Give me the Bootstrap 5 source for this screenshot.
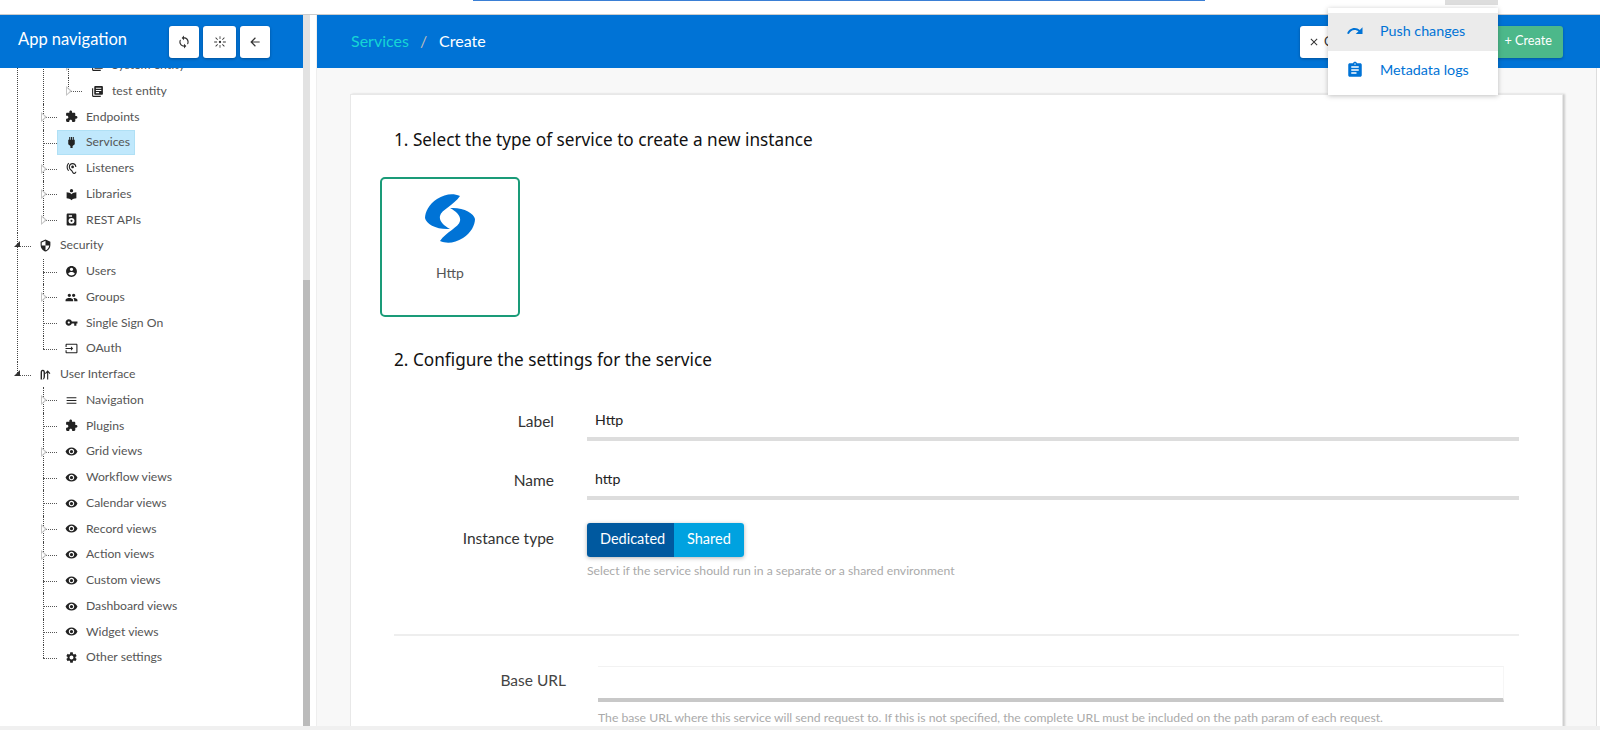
<!doctype html>
<html lang="en"><head><meta charset="utf-8"><title>Services</title>
<link href="https://cdn.jsdelivr.net/npm/bootstrap@5.3.0/dist/css/bootstrap.min.css" rel="stylesheet">
<script src="https://cdn.jsdelivr.net/npm/bootstrap@5.3.0/dist/js/bootstrap.bundle.min.js"></script>
<style>
html,body{height:730px;overflow:hidden;background:#fff}
body{font-family:Lato,"Noto Sans","Liberation Sans",sans-serif;font-size:12.2px;color:#555;position:relative}
.top-strip{height:15px;border-bottom:1px solid #ccc;background:#fff}
.top-line{width:732px;height:1px;margin-left:473px;background:#3a7fd5}
.top-tab{width:53px;height:5px;margin-left:240px;background:#ddd}
.shell{height:711px;overflow:hidden}
.foot-strip{height:4px;background:#f0f0f0}
.side{width:303px;background:#fff;overflow:hidden;flex:none}
.blue-head{height:53px;background:#0073d6;position:relative;z-index:2;flex:none}
.side-title{font-size:16.5px;color:#fff;margin-left:18px;width:151px;margin-top:-4px;white-space:nowrap}
.ico-btn{height:32px;background:#fff;border-radius:3px;box-shadow:0 1px 3px rgba(0,0,0,.3);color:#333;border:0;padding:0;white-space:nowrap;overflow:hidden}
.w30{width:30px}.w33{width:33px}
.ico-btn svg{width:14px;height:14px;fill:currentColor}
.ico-btn .ico-x{width:12px;height:12px}
.side-scroll{width:7px;background:#e2e2e2;flex:none}
.side-thumb{margin-top:265px;height:446px;background:#bbb}
.side-gap{width:7px;flex:none;background:#fff;border-right:1px solid #eee}
.main{flex:1;min-width:0;display:flex;flex-direction:column}
.main-body{flex:1;min-height:0;background:#f8f8f8;margin-right:3px;border-right:1px solid #ddd;overflow:hidden}
.crumb{margin-left:34px;font-size:16px;color:#fff;margin-top:-1px}
.crumb-link{color:#16d5d5}.crumb-sep{color:#bbb;margin:0 12px 0 11px}
.btn-cancel{width:100px;margin-left:auto;text-align:left;padding-left:8px;font-size:13px}
.btn-make{width:153px;margin-left:10px;margin-right:37px;background:#4cb88a;color:#fff;height:32px;border-radius:3px;font-size:12.7px;text-align:right;padding:5px 11px 0 0;box-shadow:0 1px 3px rgba(0,0,0,.25)}
.sheet{margin:26px 33px 0 33px;background:#fff;height:640px;border:1px solid #e8e8e8;box-shadow:2px 0 2px #ccc;padding:33px 43px 0 43px;overflow:hidden}
.step{font-family:"Noto Sans",sans-serif;font-size:17.2px;color:#111;line-height:24px;margin:0}
.tile{width:140px;height:140px;margin:25px 0 0 -14px;border:2px solid #1a9b78;border-radius:5px;color:#555;font-size:14px}
.tile svg{width:50px;height:49px;fill:#0073d6;margin-top:15px}
.tile-name{margin-top:19px}
.step2{margin-top:31px}
.flabel{width:160px;text-align:right;font-size:15.5px;color:#333;flex:none}
.finput{flex:1;margin-left:33px;height:38px;border-bottom:4px solid #ddd;font-size:14.2px;color:#222;padding:6px 0 0 8px}
.gap-a{margin-top:31px}.gap-b{margin-top:21px}.gap-c{margin-top:23px}.gap-d{margin-top:30px}
.seg-wrap{margin-left:33px}
.seg{height:34px;box-shadow:0 1px 4px rgba(0,0,0,.3);border-radius:3px;overflow:hidden;color:#fff;font-size:14.5px;width:157px}
.seg-a{width:87px;background:#00599f;padding:5px 0 0 13px}
.seg-b{width:70px;background:#00a2e0;padding:5px 0 0 13px}
.hint{color:#aaa;font-size:12.2px}
.hint-a{margin-top:5px}
.hint-b{margin:7px 0 0 204px}
.sep-line{height:2px;background:#eee;margin-top:54px}
.flabel-b{width:172px;text-align:right;font-size:15.5px;color:#444;flex:none;padding-top:3px}
.finput-b{width:906px;margin-left:32px;height:36px;border-top:1px solid #f2f2f2;border-right:1px solid #f6f6f6;border-bottom:4px solid #c8c8c8}
.menu-pop{position:absolute;left:1328px;top:8px;width:170px;height:87px;background:#fff;box-shadow:0 1px 5px rgba(0,0,0,.25);padding-top:5px;z-index:5;color:#0073d6;font-size:14.3px}
.menu-row{height:38px;padding-left:18px}
.menu-row svg{width:18px;height:18px;fill:#0073d6;margin-right:16px}
.menu-on{background:#ebebeb;padding-bottom:2px}
.tree{margin:-67px 0 0 0;padding:0;list-style:none}
.tree ul{margin:0;padding:0;list-style:none}
.node{position:relative}
.node::before{content:"";position:absolute;top:0;bottom:0;left:var(--vx);border-left:1px dotted #444}
.node.tail::before{bottom:auto;height:13px}
.node>.line::before{content:"";position:absolute;left:var(--vx);width:14px;top:13px;border-top:1px dotted #555}
.lv1{--vx:17px}.lv2{--vx:43px}.lv3{--vx:68px}
.line{height:25.76px;display:flex;align-items:center;white-space:nowrap}
.lv1>.line{padding-left:39px}
.lv2>.line{padding-left:65px}
.lv3>.line{padding-left:91px}
.line svg{width:13px;height:13px;fill:#222;flex:none;margin-right:8px}
.lv2>.line.sel{padding-left:57px}
.sel-box{display:flex;align-items:center;background:#c0e8fc;border:1px solid #b0e0f5;height:25px;padding:0 4px 0 7px;position:relative}
.tri-o::after{content:"";position:absolute;left:41px;top:8px;border-left:6px solid #c4c4c4;border-top:5px solid transparent;border-bottom:5px solid transparent}
.tri-o>.line::after{content:"";position:absolute;left:42px;top:10px;border-left:3px solid #fff;border-top:3px solid transparent;border-bottom:3px solid transparent;z-index:1}
.tri-o.lv3::after{left:66px}
.tri-o.lv3>.line::after{left:67px}
.tri-f::after{content:"";position:absolute;left:14px;top:8px;width:0;height:0;border-bottom:6px solid #333;border-left:6px solid transparent}
</style></head>
<body>
<svg width="0" height="0" class="d-none">
<symbol id="i-ext" viewBox="0 0 24 24"><path d="M20.5 11H19V7c0-1.100-.900-2-2-2h-4V3.500C13 2.120 11.880 1 10.500 1S8 2.120 8 3.500V5H4c-1.100 0-1.990.900-1.990 2v3.800H3.500c1.490 0 2.700 1.210 2.700 2.700s-1.210 2.700-2.700 2.700H2V20c0 1.100.900 2 2 2h3.800v-1.500c0-1.490 1.210-2.700 2.700-2.700 1.490 0 2.700 1.210 2.700 2.700V22H17c1.100 0 2-.900 2-2v-4h1.500c1.380 0 2.500-1.120 2.500-2.500S21.880 11 20.500 11z"/></symbol>
<symbol id="i-plug" viewBox="0 0 24 24"><path d="M15 2v5h-1.500V2h-3v5H9V2H7.500v5H6v8l4 3.500V22h4v-3.500l4-3.500V7h-1.500V2z"/></symbol>
<symbol id="i-ear" viewBox="0 0 24 24"><path d="M17 20c-.29 0-.56-.06-.76-.15-.71-.37-1.210-.88-1.710-2.380-.51-1.560-1.470-2.290-2.390-3-.79-.61-1.610-1.240-2.320-2.530C9.290 10.980 9 9.930 9 9c0-2.800 2.200-5 5-5s5 2.200 5 5h2c0-3.930-3.070-7-7-7S7 5.070 7 9c0 1.260.38 2.650 1.070 3.900.91 1.650 1.980 2.480 2.850 3.150.81.62 1.390 1.070 1.710 2.050.6 1.820 1.370 2.840 2.730 3.550.51.23 1.070.35 1.640.35 2.210 0 4-1.790 4-4h-2c0 1.100-.9 2-2 2zM7.640 2.640L6.220 1.220C4.230 3.210 3 5.960 3 9s1.230 5.790 3.220 7.780l1.410-1.410C6.010 13.740 5 11.490 5 9s1.010-4.740 2.640-6.360zM11.500 9c0 1.380 1.120 2.500 2.500 2.500s2.500-1.120 2.500-2.500-1.120-2.500-2.500-2.500-2.500 1.120-2.500 2.500z"/></symbol>
<symbol id="i-lib" viewBox="0 0 24 24"><path d="M12 11.550C9.640 9.350 6.480 8 3 8v11c3.480 0 6.640 1.350 9 3.550 2.360-2.190 5.520-3.550 9-3.550V8c-3.480 0-6.640 1.350-9 3.550zM12 8c1.660 0 3-1.340 3-3s-1.340-3-3-3-3 1.340-3 3 1.340 3 3 3z"/></symbol>
<symbol id="i-rest" viewBox="0 0 24 24"><path fill-rule="evenodd" d="M5 1h14a2 2 0 0 1 2 2v18a2 2 0 0 1-2 2H5a2 2 0 0 1-2-2V3a2 2 0 0 1 2-2zm2 3v3h6V4zm5 5a5.500 5.500 0 1 0 0 11 5.500 5.500 0 0 0 0-11zm0 3.500a2 2 0 1 1 0 4 2 2 0 0 1 0-4z"/></symbol>
<symbol id="i-shield" viewBox="0 0 24 24"><path d="M12 1L3 5v6c0 5.550 3.840 10.740 9 12 5.160-1.260 9-6.450 9-12V5l-9-4zm0 10.990h7c-.53 4.120-3.280 7.790-7 8.940V12H5V6.300l7-3.110v8.800z"/></symbol>
<symbol id="i-user" viewBox="0 0 24 24"><path d="M12 2C6.480 2 2 6.480 2 12s4.480 10 10 10 10-4.480 10-10S17.520 2 12 2zm0 3c1.660 0 3 1.340 3 3s-1.340 3-3 3-3-1.340-3-3 1.340-3 3-3zm0 14.200c-2.500 0-4.710-1.280-6-3.220.03-1.990 4-3.080 6-3.080 1.990 0 5.970 1.090 6 3.080-1.290 1.940-3.500 3.220-6 3.220z"/></symbol>
<symbol id="i-group" viewBox="0 0 24 24"><path d="M16 11c1.660 0 2.990-1.340 2.990-3S17.660 5 16 5c-1.660 0-3 1.340-3 3s1.340 3 3 3zm-8 0c1.660 0 2.990-1.340 2.990-3S9.660 5 8 5C6.340 5 5 6.340 5 8s1.340 3 3 3zm0 2c-2.330 0-7 1.170-7 3.500V19h14v-2.500c0-2.330-4.670-3.500-7-3.500zm8 0c-.29 0-.62.02-.97.05 1.160.84 1.970 1.970 1.970 3.450V19h6v-2.500c0-2.330-4.670-3.500-7-3.500z"/></symbol>
<symbol id="i-key" viewBox="0 0 24 24"><path d="M12.650 10C11.830 7.670 9.610 6 7 6c-3.310 0-6 2.690-6 6s2.690 6 6 6c2.610 0 4.830-1.670 5.650-4H17v4h4v-4h2v-4H12.650zM7 14c-1.100 0-2-.9-2-2s.9-2 2-2 2 .9 2 2-.9 2-2 2z"/></symbol>
<symbol id="i-input" viewBox="0 0 24 24"><path d="M21 3.010H3c-1.100 0-2 .9-2 2V9h2V4.990h18v14.030H3V15H1v4.010c0 1.100.9 1.980 2 1.980h18c1.100 0 2-.88 2-1.980v-14c0-1.110-.9-2-2-2zM11 16l4-4-4-4v3H1v2h10v3z"/></symbol>
<symbol id="i-road" viewBox="0 0 24 24"><path d="M7 3C3.500 3 3 6 3 9v12h2.500V9c0-2 .3-3.500 1.500-3.500S8.500 7 8.500 9v6c0 3-.5 6-3 6h1c3.500 0 4.500-3 4.500-6V9c0-3-.5-6-4-6zM17 21V8.500l2.500 2.500L21 9.500 16 4l-5 5.500L12.500 11 15 8.500V21z"/></symbol>
<symbol id="i-menu" viewBox="0 0 24 24"><path d="M3 18h18v-2H3v2zm0-5h18v-2H3v2zm0-7v2h18V6H3z"/></symbol>
<symbol id="i-eye" viewBox="0 0 24 24"><path d="M12 4.500C7 4.500 2.730 7.610 1 12c1.730 4.390 6 7.500 11 7.500s9.270-3.110 11-7.500c-1.730-4.390-6-7.500-11-7.500zM12 17c-2.760 0-5-2.240-5-5s2.240-5 5-5 5 2.240 5 5-2.240 5-5 5zm0-8c-1.660 0-3 1.340-3 3s1.340 3 3 3 3-1.340 3-3-1.340-3-3-3z"/></symbol>
<symbol id="i-gear" viewBox="0 0 24 24"><path d="M19.140 12.940c.04-.3.06-.61.06-.94 0-.32-.02-.64-.07-.94l2.030-1.580c.18-.14.23-.41.12-.61l-1.920-3.320c-.12-.22-.37-.29-.59-.22l-2.390.96c-.5-.38-1.030-.7-1.620-.94l-.36-2.540c-.04-.24-.24-.41-.48-.41h-3.840c-.24 0-.43.17-.47.41l-.36 2.540c-.59.24-1.130.57-1.620.94l-2.390-.96c-.22-.08-.47 0-.59.22L2.740 8.870c-.12.21-.08.47.12.61l2.030 1.580c-.05.3-.09.63-.09.94s.02.64.07.94l-2.030 1.580c-.18.14-.23.41-.12.61l1.920 3.320c.12.22.37.29.59.22l2.390-.96c.5.38 1.030.7 1.620.94l.36 2.540c.05.24.24.41.48.41h3.840c.24 0 .44-.17.47-.41l.36-2.540c.59-.24 1.130-.56 1.620-.94l2.390.96c.22.08.47 0 .59-.22l1.920-3.320c.12-.22.07-.47-.12-.61l-2.010-1.580zM12 15.600c-1.980 0-3.600-1.620-3.600-3.600s1.620-3.600 3.600-3.600 3.600 1.620 3.600 3.600-1.620 3.600-3.600 3.600z"/></symbol>
<symbol id="i-books" viewBox="0 0 24 24"><path d="M4 6H2v14c0 1.100.9 2 2 2h14v-2H4V6zm16-4H8c-1.100 0-2 .9-2 2v12c0 1.100.9 2 2 2h12c1.100 0 2-.9 2-2V4c0-1.100-.9-2-2-2zm-1 9H9V9h10v2zm-4 4H9v-2h6v2zm4-8H9V5h10v2z"/></symbol>
</svg>

<div class="top-strip d-flex"><div class="top-line"></div><div class="top-tab"></div></div>

<div class="shell d-flex">
  <aside class="side d-flex flex-column">
    <div class="blue-head d-flex align-items-center">
      <div class="side-title">App navigation</div>
      <div class="d-flex gap-1">
        <button class="ico-btn w30 d-flex align-items-center justify-content-center" aria-label="Sync"><svg viewBox="0 0 24 24"><path d="M12 4V1L8 5l4 4V6c3.310 0 6 2.690 6 6 0 1.010-.25 1.970-.7 2.800l1.460 1.460C19.540 15.030 20 13.570 20 12c0-4.420-3.580-8-8-8zm0 14c-3.310 0-6-2.690-6-6 0-1.010.25-1.970.7-2.800L5.240 7.740C4.460 8.970 4 10.430 4 12c0 4.420 3.580 8 8 8v3l4-4-4-4v3z"/></svg></button>
        <button class="ico-btn w33 d-flex align-items-center justify-content-center" aria-label="Focus"><svg viewBox="0 0 24 24"><path d="M11.300 2h1.400v5h-1.400zM11.300 17h1.400v5h-1.400zM2 11.300h5v1.400H2zM17 11.300h5v1.400h-5zM5 4l3.500 3.500-1 1L4 5zM19 4l1 1-3.500 3.500-1-1zM5 20l-1-1 3.500-3.500 1 1zM19 20l-3.500-3.500 1-1L20 19z"/><circle cx="12" cy="12" r="2"/></svg></button>
        <button class="ico-btn w30 d-flex align-items-center justify-content-center" aria-label="Back"><svg viewBox="0 0 24 24"><path d="M20 11H7.830l5.590-5.590L12 4l-8 8 8 8 1.410-1.410L7.830 13H20v-2z"/></svg></button>
      </div>
    </div>
    <ul class="tree">
      <li class="node lv1"><div class="line"></div>
        <ul>
          <li class="node lv2"><div class="line"></div>
            <ul>
              <li class="node lv3 tri-o"><div class="line"><svg><use href="#i-books"/></svg><span>System entity</span></div></li>
              <li class="node lv3 tail tri-o"><div class="line"><svg><use href="#i-books"/></svg><span>test entity</span></div></li>
            </ul>
          </li>
          <li class="node lv2 tri-o"><div class="line"><svg><use href="#i-ext"/></svg><span>Endpoints</span></div></li>
          <li class="node lv2"><div class="line sel"><div class="sel-box"><svg><use href="#i-plug"/></svg><span>Services</span></div></div></li>
          <li class="node lv2 tri-o"><div class="line"><svg><use href="#i-ear"/></svg><span>Listeners</span></div></li>
          <li class="node lv2 tri-o"><div class="line"><svg><use href="#i-lib"/></svg><span>Libraries</span></div></li>
          <li class="node lv2 tail tri-o"><div class="line"><svg><use href="#i-rest"/></svg><span>REST APIs</span></div></li>
        </ul>
      </li>
      <li class="node lv1 tri-f"><div class="line"><svg><use href="#i-shield"/></svg><span>Security</span></div>
        <ul>
          <li class="node lv2"><div class="line"><svg><use href="#i-user"/></svg><span>Users</span></div></li>
          <li class="node lv2 tri-o"><div class="line"><svg><use href="#i-group"/></svg><span>Groups</span></div></li>
          <li class="node lv2"><div class="line"><svg><use href="#i-key"/></svg><span>Single Sign On</span></div></li>
          <li class="node lv2 tail"><div class="line"><svg><use href="#i-input"/></svg><span>OAuth</span></div></li>
        </ul>
      </li>
      <li class="node lv1 tail tri-f"><div class="line"><svg><use href="#i-road"/></svg><span>User Interface</span></div>
        <ul>
          <li class="node lv2 tri-o"><div class="line"><svg><use href="#i-menu"/></svg><span>Navigation</span></div></li>
          <li class="node lv2"><div class="line"><svg><use href="#i-ext"/></svg><span>Plugins</span></div></li>
          <li class="node lv2 tri-o"><div class="line"><svg><use href="#i-eye"/></svg><span>Grid views</span></div></li>
          <li class="node lv2"><div class="line"><svg><use href="#i-eye"/></svg><span>Workflow views</span></div></li>
          <li class="node lv2"><div class="line"><svg><use href="#i-eye"/></svg><span>Calendar views</span></div></li>
          <li class="node lv2 tri-o"><div class="line"><svg><use href="#i-eye"/></svg><span>Record views</span></div></li>
          <li class="node lv2 tri-o"><div class="line"><svg><use href="#i-eye"/></svg><span>Action views</span></div></li>
          <li class="node lv2"><div class="line"><svg><use href="#i-eye"/></svg><span>Custom views</span></div></li>
          <li class="node lv2"><div class="line"><svg><use href="#i-eye"/></svg><span>Dashboard views</span></div></li>
          <li class="node lv2"><div class="line"><svg><use href="#i-eye"/></svg><span>Widget views</span></div></li>
          <li class="node lv2 tail"><div class="line"><svg><use href="#i-gear"/></svg><span>Other settings</span></div></li>
        </ul>
      </li>
    </ul>
  </aside>
  <div class="side-scroll"><div class="side-thumb"></div></div>
  <div class="side-gap"></div>
  <main class="main">
    <div class="blue-head d-flex align-items-center">
      <div class="crumb"><span class="crumb-link">Services</span><span class="crumb-sep">/</span>Create</div>
      <button class="ico-btn btn-cancel"><svg viewBox="0 0 24 24" class="ico-x me-1"><path d="M19 6.410L17.590 5 12 10.590 6.410 5 5 6.410 10.590 12 5 17.590 6.410 19 12 13.410 17.590 19 19 17.590 13.410 12z"/></svg>Cancel</button>
      <div class="btn-make">+ Create</div>
    </div>
    <div class="main-body">
    <div class="sheet">
      <h2 class="step fw-normal">1. Select the type of service to create a new instance</h2>
      <div class="tile d-flex flex-column align-items-center">
        <svg viewBox="0 0 50 49"><path d="M35 2C28-1 20 0 12 5 4 10 0 18 0 24c1 6 12 12 25 11-7-4-11-8-10-13 1-6 14-11 20-20z"/><path d="M15 47c7 3 15 2 23-3 8-5 12-13 12-19-1-6-12-12-25-11 7 4 11 8 10 13-1 6-14 11-20 20z"/></svg>
        <div class="tile-name">Http</div>
      </div>
      <h2 class="step step2 fw-normal">2. Configure the settings for the service</h2>
      <div class="d-flex align-items-center gap-a"><div class="flabel">Label</div><div class="finput">Http</div></div>
      <div class="d-flex align-items-center gap-b"><div class="flabel">Name</div><div class="finput">http</div></div>
      <div class="d-flex gap-c">
        <div class="flabel pt-1">Instance type</div>
        <div class="seg-wrap">
          <div class="seg d-flex"><div class="seg-a">Dedicated</div><div class="seg-b">Shared</div></div>
          <div class="hint hint-a">Select if the service should run in a separate or a shared environment</div>
        </div>
      </div>
      <div class="sep-line"></div>
      <div class="d-flex align-items-start gap-d"><div class="flabel-b">Base URL</div><div class="finput-b"></div></div>
      <div class="hint hint-b">The base URL where this service will send request to. If this is not specified, the complete URL must be included on the path param of each request.</div>
    </div>
    </div>
  </main>
</div>
<div class="foot-strip"></div>
<div class="menu-pop">
  <div class="menu-row menu-on d-flex align-items-center"><svg viewBox="0 0 24 24"><path d="M18.400 10.600C16.550 8.990 14.150 8 11.500 8c-4.650 0-8.580 3.030-9.960 7.220L3.900 16c1.050-3.190 4.050-5.500 7.600-5.500 1.950 0 3.730.72 5.120 1.880L13 16h9V7l-3.600 3.600z"/></svg>Push changes</div>
  <div class="menu-row d-flex align-items-center"><svg viewBox="0 0 24 24"><path d="M19 3h-4.180C14.400 1.840 13.300 1 12 1c-1.300 0-2.400.84-2.820 2H5c-1.100 0-2 .9-2 2v14c0 1.100.9 2 2 2h14c1.100 0 2-.9 2-2V5c0-1.100-.9-2-2-2zm-7 0c.55 0 1 .45 1 1s-.45 1-1 1-1-.45-1-1 .45-1 1-1zm2 14H7v-2h7v2zm3-4H7v-2h10v2zm0-4H7V7h10v2z"/></svg>Metadata logs</div>
</div>
</body></html>
